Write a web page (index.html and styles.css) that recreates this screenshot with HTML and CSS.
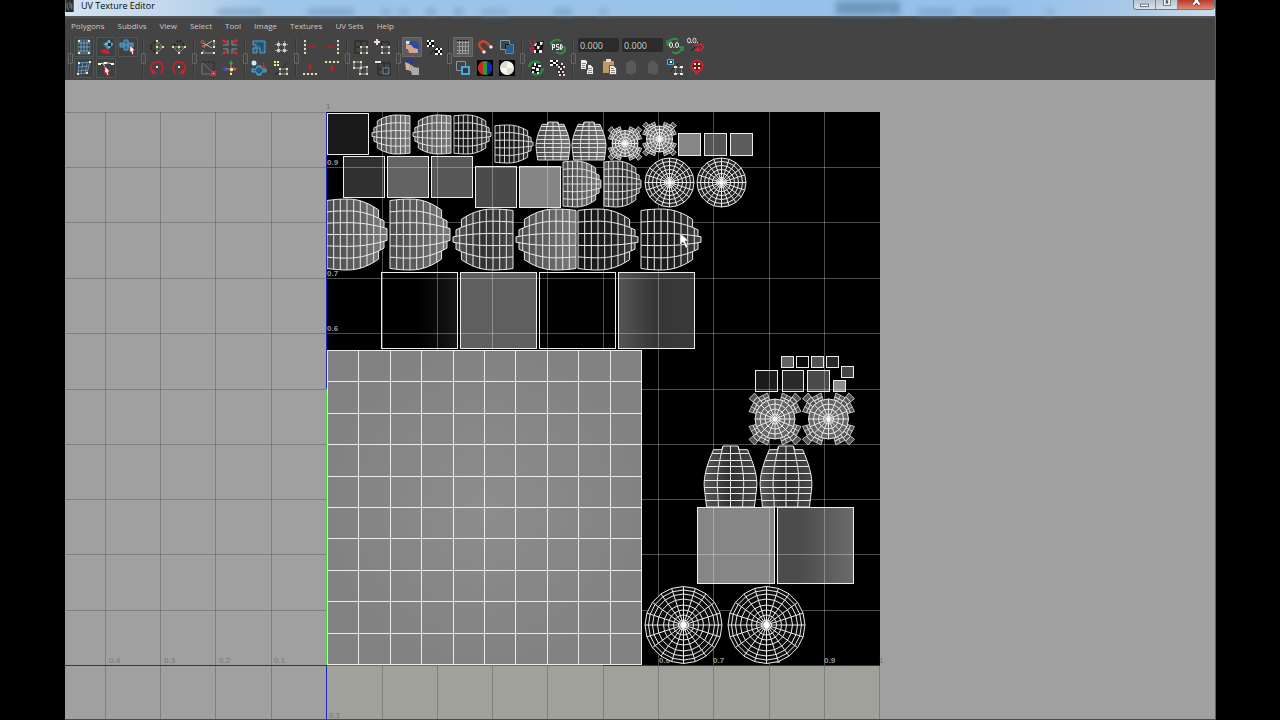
FILE: index.html
```html
<!DOCTYPE html>
<html lang="en">
<head>
<meta charset="utf-8">
<title>UV Texture Editor</title>
<link rel="stylesheet" href="styles.css">
</head>
<body>
<main class="window">
  <header class="titlebar">
    <svg class="app-icon" viewBox="0 0 9 13" aria-hidden="true"><rect width="9" height="13" fill="#26292d"/><path d="M2 3v6l2 2M5 2v7M7 4v6" stroke="#8b9299" fill="none"/></svg>
    <h1 class="title">UV Texture Editor</h1>
    <span class="haze" aria-hidden="true"></span>
    <div class="window-buttons">
      <button class="wb" aria-label="Minimize"><svg viewBox="0 0 24 10"><rect x="7.500" y="4.500" width="9" height="3" fill="#fff" stroke="#56616c"/></svg></button>
      <button class="wb" aria-label="Maximize"><svg viewBox="0 0 24 10"><path d="M8.500-1v7h8v-7" fill="#fff" stroke="#56616c"/><rect x="11" width="3" height="4" fill="#56616c"/></svg></button>
      <button class="wb close" aria-label="Close"><svg viewBox="0 0 36 10"><path d="M15-3l7 8M22-3l-7 8" stroke="#5d2424" stroke-width="4"/><path d="M15-3l7 8M22-3l-7 8" stroke="#fff" stroke-width="2.500"/></svg></button>
    </div>
  </header>
  <nav class="menubar">
    <button>Polygons</button><button>Subdivs</button><button>View</button><button>Select</button><button>Tool</button><button>Image</button><button>Textures</button><button>UV Sets</button><button>Help</button>
  </nav>
  <div class="toolbar" role="toolbar" aria-label="UV tools">
    <span class="sep"></span>
    <div class="group cols3">
      <button class="tool framed" aria-label="Lattice"><svg viewBox="0 0 20 20"><path d="M4 6h12M4 10h12M4 14h12M7 3v14M10 3v14M13 3v14" stroke="#6f9fc9"/><path d="M4 3h12v14H4z" fill="none" stroke="#55718b"/><path d="M4 3h2v2H4zM14 3h2v2h-2zM4 15h2v2H4zM14 15h2v2h-2z" fill="#eceac0"/></svg></button>
      <button class="tool framed" aria-label="Move shell"><svg viewBox="0 0 20 20"><path d="M7 7l6-4 4 5-5 5z" fill="#3e88ae"/><path d="M4 13l5-1 5 3-1 2-6-1z" fill="#d3202c"/><path d="M13 3v8M9 7h8" stroke="#b0dbe8"/><path d="M12 6h3v3h-3z" fill="#222"/></svg></button>
      <button class="tool framed" aria-label="Select shell"><svg viewBox="0 0 20 20"><path d="M2 6h4V3h4v3h5v4h-5v3H6v-3H2z" fill="#2f6b91" stroke="#5a9fc4"/><path d="M6 6v4M10 6v4M2 8h13" stroke="#5a9fc4"/><path d="M12 8l5 5.500-2 .500 1 3-2 .500-1-3-1.500 1z" fill="#fff" stroke="#b71b3b"/></svg></button>
      <button class="tool framed" aria-label="Smudge"><svg viewBox="0 0 20 20"><path d="M5 5l11-1-3 11-9 1zM4 9l11-1M4 13l10-1M9 4L7 16M13 4l-2 12" fill="none" stroke="#6b90b0"/><path d="M4 4h2v2H4zM15 3h2v2h-2zM3 15h2v2H3zM12 14h2v2h-2z" fill="#eceac0"/></svg></button>
      <button class="tool framed" aria-label="Edge select"><svg viewBox="0 0 20 20"><path d="M3 6q7-3 14 0M7 5l3 6" fill="none" stroke="#ddd"/><path d="M2 5h3v2H2zM8 4h3v2H8zM15 5h3v2h-3z" fill="#ffffd4"/><path d="M9 8l5 5.500-2 .500 1 3-2 .500-1-3-1.500 1z" fill="#fff" stroke="#b71b3b"/></svg></button>
    </div>
    <span class="sep"></span>
    <div class="group cols2">
      <button class="tool" aria-label="Flip U"><svg viewBox="0 0 20 20"><path d="M10 4v12M10 10h5M10 4l6 6-6 6" stroke="#85876f" fill="none"/><path d="M8 5l-5 5 5 5" stroke="#242424" fill="none" stroke-width="2" stroke-dasharray="2 2"/><path d="M9 3h2v2H9zM15 9h2v2h-2zM9 9h2v2H9zM9 15h2v2H9z" fill="#e4e3a6"/></svg></button>
      <button class="tool" aria-label="Flip V"><svg viewBox="0 0 20 20"><path d="M4 10h12M10 10v5M4 10l6 6 6-6" stroke="#85876f" fill="none"/><path d="M5 8l5-5 5 5" stroke="#242424" fill="none" stroke-width="2" stroke-dasharray="2 2"/><path d="M3 9h2v2H3zM9 9h2v2H9zM15 9h2v2h-2zM9 15h2v2H9z" fill="#e4e3a6"/></svg></button>
      <button class="tool" aria-label="Rotate left"><svg viewBox="0 0 20 20"><path d="M7 15a6 6 0 1 1 6 0" fill="none" stroke="#c61e2b" stroke-width="1.800"/><path d="M4 16h6l-4-5z" fill="#d2202e"/><path d="M9 8h2v2H9z" fill="#f8eec0"/></svg></button>
      <button class="tool" aria-label="Rotate right"><svg viewBox="0 0 20 20"><path d="M7 15a6 6 0 1 1 6 0" fill="none" stroke="#c61e2b" stroke-width="1.800"/><path d="M16 16h-6l4-5z" fill="#d2202e"/><path d="M9 8h2v2H9z" fill="#f8eec0"/></svg></button>
    </div>
    <span class="sep"></span>
    <div class="group cols2">
      <button class="tool" aria-label="Cut edges"><svg viewBox="0 0 20 20"><path d="M4 16h12M16 4v5M6 13l-2 3" stroke="#999" fill="none"/><path d="M5 6l9 5M6 9l8-5" stroke="#bbb"/><circle cx="4.500" cy="5" r="1.500" fill="none" stroke="#cb6038"/><path d="M4 9l3 1" stroke="#cb6038" stroke-width="2"/><path d="M15 3h2v2h-2zM15 9h2v2h-2zM3 15h2v2H3zM15 15h2v2h-2z" fill="#eceac0"/></svg></button>
      <button class="tool" aria-label="Split UVs"><svg viewBox="0 0 20 20"><path d="M8 3v5H3M12 3v5h5M8 17v-5H3M12 17v-5h5" stroke="#7899a3" fill="none"/><path d="M2 3h3l2 3-3-1zM18 3h-3l-2 3 3-1zM2 17h3l2-3-3 1zM18 17h-3l-2-3 3 1z" fill="#d42836" stroke="#d42836"/></svg></button>
      <button class="tool" aria-label="Sew edges"><svg viewBox="0 0 20 20"><path d="M4 4h12v9" stroke="#292929" fill="none" stroke-dasharray="2 1"/><path d="M4 5v11h9M5 5l9 9" stroke="#777" fill="none"/><path d="M13 13h5v5h-5z" fill="#cf2e3a"/><path d="M15 15h1v1h-1z" fill="#ffd5ca"/></svg></button>
      <button class="tool" aria-label="Move and sew"><svg viewBox="0 0 20 20"><path d="M4 11h12M11 5v12" stroke="#b7975a"/><path d="M11 2l2 4H9z" fill="#2cab38"/><path d="M6 8v6l-4-3z" fill="#2851e6"/><path d="M14 9l3 2-3 2z" fill="#dc5644"/><path d="M10 10h3v3h-3zM10 15h2v2h-2z" fill="#f1e5b5"/></svg></button>
    </div>
    <span class="sep"></span>
    <div class="group cols2">
      <button class="tool" aria-label="Layout"><svg viewBox="0 0 20 20"><path d="M4 4h12v12h-5v-5H8v5H4v-5h3V8H4z" fill="#246182" stroke="#58a3c4"/><path d="M8 7h5v6" fill="none" stroke="#1a4055"/></svg></button>
      <button class="tool" aria-label="Grid UVs"><svg viewBox="0 0 20 20"><path d="M7.500 4v12M13.500 4v12M4 7.500h13M4 13.500h13" stroke="#999"/><path d="M6 6h3v3H6zM12 6h3v3h-3zM6 12h3v3H6zM12 12h3v3h-3z" fill="#cfcdaa"/></svg></button>
      <button class="tool" aria-label="Unfold"><svg viewBox="0 0 20 20"><path d="M3 11h5V8h4v3h5v3h-5v3H8v-3H3z" fill="#277ba4" stroke="#5aa8cb"/><path d="M8 11v3h4v-3z" fill="none" stroke="#153c58"/><circle cx="5" cy="5" r="2.500" fill="#c8edfc"/><path d="M14 4v4h-2l3 3 2-3h-2V4z" fill="#bd352a"/></svg></button>
      <button class="tool" aria-label="Spread UVs"><svg viewBox="0 0 20 20"><path d="M4 17L16 5" stroke="#222"/><path d="M9 11h7v5H9z" fill="none" stroke="#999"/><path d="M3 3h2v2H3zM6 3h2v2H6zM3 6h2v2H3zM6 6h2v2H6z" fill="#f4f183"/><path d="M8 10h2v2H8zM15 10h2v2h-2zM8 15h2v2H8zM15 15h2v2h-2z" fill="#e3e1ac"/></svg></button>
    </div>
    <span class="sep"></span>
    <div class="group cols2">
      <button class="tool" aria-label="Align minimum U"><svg viewBox="0 0 20 20"><path d="M5 4v12" stroke="#666"/><path d="M4 3h2v2H4zM4 7h2v2H4zM4 11h2v2H4zM4 15h2v2H4z" fill="#dfddb2"/><path d="M8 10l4-2v1h4v2h-4v1z" fill="#a92029"/></svg></button>
      <button class="tool" aria-label="Align maximum U"><svg viewBox="0 0 20 20"><path d="M16 4v12" stroke="#666"/><path d="M15 3h2v2h-2zM15 7h2v2h-2zM15 11h2v2h-2zM15 15h2v2h-2z" fill="#dfddb2"/><path d="M13 10L9 8v1H5v2h4v1z" fill="#a92029"/></svg></button>
      <button class="tool" aria-label="Align minimum V"><svg viewBox="0 0 20 20"><path d="M4 16h12" stroke="#666"/><path d="M3 15h2v2H3zM7 15h2v2H7zM11 15h2v2h-2zM15 15h2v2h-2z" fill="#dfddb2"/><path d="M10 13L7 9h2V6h2v3h2z" fill="#b5232d"/></svg></button>
      <button class="tool" aria-label="Align maximum V"><svg viewBox="0 0 20 20"><path d="M4 4h12" stroke="#666"/><path d="M3 3h2v2H3zM7 3h2v2H7zM11 3h2v2h-2zM15 3h2v2h-2z" fill="#dfddb2"/><path d="M10 14L7 10h2V7h2v3h2z" fill="#b5232d"/></svg></button>
    </div>
    <span class="sep"></span>
    <div class="group cols2">
      <button class="tool" aria-label="Isolate toggle"><svg viewBox="0 0 20 20"><path d="M4 4h12v12H4zM10 4v12M4 10h12" fill="none" stroke="#222"/><path d="M10 10h6v6h-6z" fill="none" stroke="#999"/><path d="M9 9h2v2H9zM15 9h2v2h-2zM9 15h2v2H9zM15 15h2v2h-2z" fill="#e2e0b4"/></svg></button>
      <button class="tool" aria-label="Add to isolation"><svg viewBox="0 0 20 20"><path d="M8 5h8v11H9z" fill="none" stroke="#222"/><path d="M9 10h7v6H9z" fill="none" stroke="#999"/><path d="M4 2v6M1 5h6" stroke="#f4d9de" stroke-width="2"/><path d="M8 9h2v2H8zM15 9h2v2h-2zM8 15h2v2H8zM15 15h2v2h-2z" fill="#e4e2a4"/></svg></button>
      <button class="tool" aria-label="Isolate selection"><svg viewBox="0 0 20 20"><path d="M3 4h7v6H3zM9 9h7v7H9z" fill="none" stroke="#aaa"/><path d="M2 3h2v2H2zM9 3h2v2H9zM2 9h2v2H2zM9 9h2v2H9zM15 8h2v2h-2zM8 15h2v2H8zM15 15h2v2h-2z" fill="#e4e2b4"/></svg></button>
      <button class="tool" aria-label="Remove from isolation"><svg viewBox="0 0 20 20"><path d="M5 5h12v12H5zM11 5v12M5 11h12" fill="none" stroke="#222"/><path d="M10 10h6v6h-6z" fill="none" stroke="#6b8ea1"/><path d="M2 4h6" stroke="#f2dce0" stroke-width="2"/></svg></button>
    </div>
    <span class="sep"></span>
    <div class="group cols2">
      <button class="tool pressed" aria-label="Display image"><svg viewBox="0 0 20 20"><path d="M4 4h10l3 4v7l-8-5-5-4z" fill="#294ca4"/><path d="M4 7l5 1 3 3 4 1v4H7l-1-4H4z" fill="#d6a48b"/><path d="M4 4h4L7 7H4z" fill="#cbe1f5"/></svg></button>
      <button class="tool" aria-label="Toggle filtering"><svg viewBox="0 0 20 20"><path d="M3 3h7v7H3zM11 11h7v7h-7z" fill="#111"/><path d="M3 3h2v2H3zM7 3h3v2H7zM5 5h2v3H5zM8 8h2v2H8zM3 8h2v2H3zM11 11h3v2h-3zM16 11h2v2h-2zM14 13h2v3h-2zM11 16h3v2h-3zM16 16h2v2h-2z" fill="#fff"/><path d="M6 17l8-8" stroke="#151515"/></svg></button>
      <button class="tool" aria-label="Dim image"><svg viewBox="0 0 20 20"><path d="M3 2h8v7H3z" fill="#273e89"/><path d="M3 4l5 2v6H4z" fill="#dfaa9b"/><path d="M7 7h8l2 3v7h-7l-1-4H7z" fill="#a9aaa8"/><path d="M8 6h7l2 4-5-1z" fill="#444"/></svg></button>
    </div>
    <span class="sep"></span>
    <div class="group cols3">
      <button class="tool pressed" aria-label="Toggle grid"><svg viewBox="0 0 20 20"><path d="M4 5.500h12M4 9.500h12M4 13.500h12M4 16.500h12M6.500 4v13M9.500 4v13M12.500 4v13M15.500 4v13" stroke="#999"/><path d="M4 3.500h12" stroke="#222" stroke-dasharray="2 1"/></svg></button>
      <button class="tool" aria-label="Snap to pixels"><svg viewBox="0 0 20 20"><path d="M9 15l-4-5C2 6 8 2 12 6l5 5" fill="none" stroke="#ce4435" stroke-width="2.500"/><path d="M8 14l2 2M15 9l2 2" stroke="#eee" stroke-width="3"/></svg></button>
      <button class="tool" aria-label="Toggle shaded"><svg viewBox="0 0 20 20"><path d="M3.500 3.500h9v9h-9z" fill="none" stroke="#7a9eb4"/><path d="M8.500 7.500h8v9h-8z" fill="#245f8d" stroke="#4b8abb"/><path d="M8.500 12V7.500h4" stroke="#151515" fill="none"/></svg></button>
      <button class="tool" aria-label="Toggle borders"><svg viewBox="0 0 20 20"><path d="M3.500 3.500h9v9h-9z" fill="none" stroke="#8399a6"/><path d="M9 9h7v7H9z" fill="#303b43" stroke="#50a4dc" stroke-width="2"/></svg></button>
      <button class="tool" aria-label="RGB channels"><svg viewBox="0 0 20 20"><path d="M2 2h16v16H2z" fill="#000"/><circle cx="10" cy="10" r="7" fill="#29a12f"/><path d="M8 3.300a7 7 0 0 0 0 13.400z" fill="#cf2922"/><path d="M12 3.300a7 7 0 0 1 0 13.400z" fill="#1825c5"/></svg></button>
      <button class="tool" aria-label="Alpha channel"><svg viewBox="0 0 20 20"><path d="M2 2h16v16H2z" fill="#000"/><circle cx="10" cy="10" r="7" fill="#f5f5f5"/><path d="M10 3v7H3a7 7 0 0 1 7-7M10 10h7a7 7 0 0 1-7 7" fill="#ddddcf"/></svg></button>
    </div>
    <span class="sep"></span>
    <div class="group cols2">
      <button class="tool" aria-label="Bake texture"><svg viewBox="0 0 20 20"><path d="M8 6l10-2-2 12H8z" fill="#111"/><path d="M9 6h2l-1 3H8zM14 5h3l-1 3h-2zM11 9h3l-1 3h-2zM8 13h2v3H8zM13 13h3v3h-3z" fill="#eee"/><path d="M3 3l4 7M4 11h5l-3 4zM9 3v4" stroke="#d12638" fill="none"/></svg></button>
      <button class="tool" aria-label="Update PSD"><svg viewBox="0 0 20 20"><path d="M3 7c2-5 8-5 10-3M8 15c5 3 9 1 9-4" fill="none" stroke="#2c8f41" stroke-width="2"/><path d="M3 4v4h4M17 15v-5h-4" fill="none" stroke="#2c8f41" stroke-width="1.500"/><path d="M4.500 13V7.500h2v3h-2M11 7.500H8.500v2.500H11v2.500H8M12.500 7.500h1q2 2.500 0 5h-1z" stroke="#f3f3f3" fill="none"/></svg></button>
      <button class="tool" aria-label="Refresh image"><svg viewBox="0 0 20 20"><path d="M3 9c1-6 8-6 11-4M6 15c5 3 10 1 11-5" fill="none" stroke="#2b8745" stroke-width="2.500"/><path d="M7 5l8 2-2 9-8-2z" fill="#111"/><path d="M8 5h2v3H8zM12 7h3v2h-3zM6 9h3v2H6zM10 10h3v3h-3zM6 13h2v2H6zM11 14h2v2h-2z" fill="#eee"/></svg></button>
      <button class="tool" aria-label="Use image ratio"><svg viewBox="0 0 20 20"><path d="M2 2h8v6H2z" fill="#111"/><path d="M2 2h3v2H2zM8 2h2v2H8zM5 4h3v2H5zM2 6h3v2H2zM8 6h2v2H8z" fill="#fff"/><path d="M9 8l4-3 4 3-2 3 2 3-2 3H11l-2-3 2-3z" fill="#292929"/><path d="M13 5h2v2h-2zM10 8h2v2h-2zM15 8h2v2h-2zM12 10h2v2h-2zM10 13h2v2h-2zM14 13h2v2h-2zM11 16h2v2h-2zM15 16h2v2h-2z" fill="#f1ddd7"/></svg></button>
    </div>
    <span class="sep"></span>
    <div class="group cols6">
      <input class="coord" type="text" value="0.000" aria-label="U coordinate">
      <input class="coord" type="text" value="0.000" aria-label="V coordinate">
      <button class="tool" aria-label="Refresh values"><svg viewBox="0 0 20 20"><path d="M3 7c2-6 8-6 10-4M7 15c5 3 9 0 10-5" fill="none" stroke="#2f9344" stroke-width="2"/><path d="M2 3v5h4M18 14v-4h-4" fill="none" stroke="#2f9344" stroke-width="1.500"/><ellipse cx="6" cy="8" rx="1.500" ry="2.500" stroke="#eee" fill="none"/><ellipse cx="12" cy="8" rx="1.500" ry="2.500" stroke="#eee" fill="none"/><path d="M8.500 10h1v1h-1z" fill="#eee"/></svg></button>
      <button class="tool" aria-label="Toggle coordinate entry"><svg viewBox="0 0 20 20"><ellipse cx="2" cy="3.500" rx="1.500" ry="2.500" stroke="#ddd" fill="none"/><ellipse cx="7.500" cy="3.500" rx="1.500" ry="2.500" stroke="#ddd" fill="none"/><path d="M4 5h1v1H4zM10 5h1v1h-1z" fill="#eee"/><path d="M4 14l9-9" stroke="#191919"/><path d="M8 9c3-3 8-2 8 1s-3 4-6 2" fill="none" stroke="#cb2432" stroke-width="2"/><path d="M12 10v5l-5-2z" fill="#d02636"/></svg></button>
      <button class="tool" aria-label="Copy"><svg viewBox="0 0 20 20"><path d="M3.500 1.500h5l2 2v8h-7zM9.500 6.500h4l3 3v7h-7z" fill="#eeeee9" stroke="#444"/><path d="M5 5.500h4M5 7.500h3M5 9.500h3M11 10.500h4M11 12.500h4M11 14.500h4" stroke="#888"/></svg></button>
      <button class="tool" aria-label="Paste"><svg viewBox="0 0 20 20"><path d="M4 3h11v12H4z" fill="#c09861"/><path d="M7 1h5v3H7z" fill="#ddd"/><path d="M10.500 7.500h4l3 3v6h-7z" fill="#eeede8" stroke="#555"/><path d="M12 10.500h3M12 12.500h4M12 14.500h4" stroke="#888"/></svg></button>
      <button class="tool" aria-label="Paste U" disabled><svg viewBox="0 0 20 20"><path d="M5 5l5-3 5 3v10l-5 2-5-2z" fill="#595959"/></svg></button>
      <button class="tool" aria-label="Paste V" disabled><svg viewBox="0 0 20 20"><path d="M5 6l4-4 6 4v9l-3 2-7-2z" fill="#595959"/></svg></button>
      <button class="tool" aria-label="Copy faces"><svg viewBox="0 0 20 20"><path d="M2.500 1.500h6v5h-6z" fill="#174c75" stroke="#5ca9d8"/><path d="M5 3h2v2H5z" fill="#fff"/><path d="M5 14L14 5" stroke="#222"/><path d="M10.500 9.500h6v6h-6z" fill="none" stroke="#999" stroke-dasharray="2 1"/><path d="M9 8h3v2H9zM15 8h3v2h-3zM9 15h3v2H9zM15 15h3v2h-3z" fill="#eee"/></svg></button>
      <button class="tool" aria-label="Cycle UVs"><svg viewBox="0 0 20 20"><circle cx="10" cy="8" r="5.500" fill="#621c20" stroke="#c82637" stroke-width="2"/><path d="M7 13h6l-4 4z" fill="#d32639"/><path d="M7 5h2v2H7zM11 5h2v2h-2zM7 9h2v2H7zM11 9h2v2h-2z" fill="#eee7bd"/></svg></button>
    </div>
  </div>
  <svg class="canvas" id="canvas" viewBox="65 80 1150 639" preserveAspectRatio="xMidYMid slice" role="img" aria-label="UV layout"></svg>
</main>
<script src="uv.js"></script>
</body>
</html>
```

FILE: styles.css
```css
* { box-sizing: border-box; }
body {
  margin: 0;
  padding: 0 64px 0 65px;
  background: #000;
  font-family: "Open Sans", "Noto Sans", sans-serif;
}
.window {
  display: flex;
  flex-direction: column;
  height: 100vh;
  overflow: hidden;
  border-right: 1px solid #5b6064;
  border-bottom: 1px solid #4b4b4b;
  background: #444;
}
button { margin: 0; padding: 0; border: 0; background: none; font: inherit; color: inherit; }
.titlebar {
  display: flex;
  align-items: flex-start;
  height: 18px;
  flex: none;
  border-bottom: 2px solid #51565a;
  background: linear-gradient(90deg, #d5e3f1 0, #c3d8ec 9%, #9fc5e8 18%, #94c0eb 82%, #a8c8e8 92%, #cbdbea 100%);
}
.app-icon { width: 9px; height: 12px; }
.title {
  margin: 0 0 0 7px;
  font-size: 9px;
  font-weight: 400;
  line-height: 11px;
  color: #08090b;
}
.haze {
  flex: 1;
  height: 14px;
  margin: 1px 24px 0 44px;
  filter: blur(3px);
  background:
    linear-gradient(90deg, transparent 0 2%, #668db0 2% 7%, transparent 7% 12%, #668db0 12% 17%, transparent 17% 20%, #7197ba 20% 21%, transparent 21% 22%, #7197ba 22% 23%, transparent 23% 25%, #668db0 25% 26%, transparent 26% 28%, #668db0 28% 29%, transparent 29% 31%, #7a9fc1 31% 34%, transparent 34% 39%, #668db0 39% 41%, transparent 41% 44%, #7197ba 44% 45%, transparent 45% 75%, #6790b7 75% 76%, transparent 76% 79%, #6790b7 79% 83%, transparent 83% 85%, #6790b7 85% 89%, transparent 89% 93%, #7ba2c7 93% 94%, transparent 94%) 0 8px / 100% 6px no-repeat,
    linear-gradient(90deg, transparent 0 70%, #557b9f 70% 77%, transparent 77%);
  opacity: .6;
}
.window-buttons {
  display: flex;
  height: 10px;
  border: 1px solid #6d7782;
  border-top: 0;
  border-radius: 0 0 4px 4px;
  overflow: hidden;
}
.wb { width: 22px; background: linear-gradient(#b5c2cf, #dbe5ee); border-right: 1px solid #7d8893; }
.wb svg { display: block; width: 100%; height: 9px; }
.close { width: 36px; border-right: 0; background: linear-gradient(#bb3a2c, #db8877); }
.menubar {
  display: flex;
  flex: none;
  gap: 13px;
  height: 18px;
  padding: 0 6px;
  font-size: 8px;
  line-height: 16px;
  color: #c8c8c8;
}
.menubar button { align-self: flex-start; }
.toolbar { display: flex; flex: none; height: 44px; padding: 1px 0 2px; }
.sep {
  position: relative;
  flex: none;
  width: 1px;
  margin: 1px 4px;
  background: #383838;
  box-shadow: 1px 0 #505050;
}
.sep::after {
  content: "";
  position: absolute;
  top: 15px;
  left: -1px;
  width: 3px;
  height: 9px;
  border: 1px solid #696969;
  border-radius: 1px;
}
.group { display: grid; grid-auto-rows: 20px; gap: 1px 2px; align-content: start; }
.cols2 { grid-template-columns: repeat(2, 20px); }
.cols3 { grid-template-columns: repeat(3, 20px); }
.cols6 { grid-template-columns: repeat(6, 20px); }
.tool { width: 20px; height: 20px; border-radius: 1px; }
.tool svg { display: block; width: 100%; height: 100%; }
.framed { background: #3c4242; box-shadow: inset 0 0 0 1px #505654; }
.pressed { background: #5c5c5c; box-shadow: inset 0 0 0 1px #6c6c6c; }
.coord {
  grid-column: span 2;
  align-self: start;
  justify-self: end;
  width: 41px;
  height: 14px;
  margin-top: 1px;
  padding: 0 2px;
  border: 0;
  border-radius: 2px;
  background: #2b2b2b;
  color: #cecece;
  font: 9px "Open Sans", "Noto Sans", sans-serif;
}
.canvas { display: block; flex: 1; width: 100%; min-height: 0; background: #a0a0a0; }
.wire { fill: none; stroke: #ececec; stroke-width: 1; }
.fine { stroke-width: .9; }
.ruler { font: 8px "Liberation Sans", Arial, sans-serif; fill: #747474; }
.ruler-dark { font-weight: 700; fill: #999; }
```

FILE: uv.js
```javascript
const NS = "http://www.w3.org/2000/svg";
const canvas = document.getElementById("canvas");

function add(tag, attrs, text) {
  const el = document.createElementNS(NS, tag);
  for (const key in attrs) el.setAttribute(key, attrs[key]);
  if (text) el.textContent = text;
  canvas.appendChild(el);
  return el;
}
const n = v => v.toFixed(1);
const path = pts => "M" + pts.map(p => n(p[0]) + " " + n(p[1])).join("L");

const defs = add("defs", {});
defs.innerHTML =
  '<linearGradient id="shade"><stop offset="0" stop-color="#5a5a5a"/><stop offset=".5" stop-color="#303030"/><stop offset="1" stop-color="#4a4a4a"/></linearGradient>' +
  '<linearGradient id="light"><stop offset="0" stop-color="#4c4c4c"/><stop offset=".5" stop-color="#606060"/><stop offset="1" stop-color="#7c7c7c"/></linearGradient>' +
  '<linearGradient id="dark"><stop offset="0" stop-color="#151515"/><stop offset=".6" stop-color="#202020"/><stop offset="1" stop-color="#484848"/></linearGradient>' +
  '<linearGradient id="edge"><stop offset=".5" stop-color="#000"/><stop offset="1" stop-color="#181818"/></linearGradient>' +
  '<linearGradient id="fade"><stop offset="0" stop-color="#555"/><stop offset=".5" stop-color="#363636"/><stop offset="1" stop-color="#3a3a3a"/></linearGradient>' +
  '<linearGradient id="side"><stop offset=".3" stop-color="#4c4c4c"/><stop offset="1" stop-color="#6b6b6b"/></linearGradient>' +
  '<radialGradient id="glow"><stop offset="0" stop-color="#8d8d8d"/><stop offset="1" stop-color="#828282"/></radialGradient>';

// Texture space and the grid around it
add("rect", { x: 327, y: 112, width: 553, height: 553, fill: "#000" });
add("rect", { x: 327, y: 666, width: 553, height: 53, fill: "#a0a19b" });

// Square shells: x, y, width, height, fill
const squares = [
  [327, 113, 41, 41, "#191919"], [343, 156, 41, 41, "#303030"], [387, 156, 41, 41, "#636363"],
  [431, 156, 41, 41, "#585858"], [475, 166, 41, 41, "#4b4b4b"], [519, 166, 41, 41, "#858585"],
  [678, 133, 22, 22, "#868686"], [704, 133, 22, 22, "#555"], [730, 133, 22, 22, "#5d5d5d"],
  [381, 272, 76, 76, "url(#edge)"], [460, 272, 76, 76, "#5f5f5f"], [539, 272, 76, 76, "#020202"],
  [618, 272, 76, 76, "url(#fade)"], [697, 507, 77, 76, "#868686"], [777, 507, 76, 76, "url(#side)"],
  [755, 370, 22, 21, "#1c1b1c"], [782, 370, 21, 21, "#2b292b"], [807, 370, 22, 21, "#4b4b4b"],
  [781, 356, 12, 11, "#636363"], [796, 356, 12, 11, "#100b0d"], [811, 356, 12, 11, "#535353"],
  [826, 356, 12, 11, "#292929"], [841, 366, 12, 11, "#474747"], [833, 380, 12, 11, "#8d8d8d"]
];
for (const [x, y, width, height, fill] of squares) add("rect", { x, y, width, height, fill });

const xs = [105, 160, 215, 271, 382, 437, 492, 547, 603, 658, 713, 769, 824];
const ys = [167, 222, 278, 333, 389, 444, 499, 554, 610];
let outer = "M65 112.500H880M879.500 112V719", inner = "";
for (const x of xs) {
  if (x < 327) outer += `M${x}.500 112V719`;
  else { inner += `M${x}.500 112V665`; outer += `M${x}.500 665V719`; }
}
for (const y of ys) { outer += `M65 ${y}.500H327`; inner += `M327 ${y}.500H880`; }
add("path", { d: outer, stroke: "#000", "stroke-opacity": .2, fill: "none" });
add("path", { d: inner, stroke: "#fff", "stroke-opacity": .3, fill: "none" });

const labels = [[327, 165, "0.9"], [327, 220, "0.8"], [327, 276, "0.7"], [327, 331, "0.6"],
  [659, 663, "0.6"], [713, 663, "0.7"], [769, 663, "0.8"], [824, 663, "0.9"]];
for (const [x, y, t] of labels) add("text", { x, y, class: "ruler ruler-dark" }, t);
for (const [x, y, t] of [[109, 663, "0.4"], [164, 663, "0.3"], [219, 663, "0.2"], [274, 663, "0.1"],
  [326, 109, "1"], [879, 663, "1"], [329, 718, "0.1"]]) add("text", { x, y, class: "ruler" }, t);

for (const [x, y, width, height] of squares)
  add("rect", { x: x + .5, y: y + .5, width, height, class: "wire" });

// Ground plane, ten by ten
add("rect", { x: 327, y: 350, width: 315, height: 315, fill: "url(#glow)" });
let plane = "";
for (let i = 0; i <= 10; i++) {
  const k = Math.round(i * 31.4);
  plane += `M${327.5 + k} 350V665M327 ${350.5 + k}H642`;
}
add("path", { d: plane, class: "wire" });

// Half barrel lying on its side; dir is the side that its tip points to
function barrel(x, y, w, h, dir, taper, cols, rows, fill, fine) {
  const cy = y + h / 2;
  const px = u => dir > 0 ? x + u * w : x + w - u * w;
  const bend = u => 1 - taper * Math.pow((u - .35) / .65, 2) * (u < .35 ? .3 : 1);
  const py = (u, j) => cy + (j / rows - .5) * h * bend(u);
  const reach = b => {
    const d = Math.abs(b + .5 - rows / 2) / (rows / 2);
    return d < .35 ? 1 : d < .7 ? .95 : .86;
  };
  const arc = (j, end) => {
    const pts = [];
    for (let i = 0; i <= 10; i++) pts.push([px(end * i / 10), py(end * i / 10, j)]);
    return pts;
  };
  let area = "", lines = "";
  for (let b = 0; b < rows; b++) {
    const end = reach(b);
    const outline = path(arc(b, end).concat(arc(b + 1, end).reverse())) + "Z";
    area += outline;
    for (let i = 1; i < cols; i++) {
      const u = i / cols;
      if (u < end - .06) lines += path([[px(u), py(u, b)], [px(u), py(u, b + 1)]]);
    }
    lines += path([[px(0), py(0, b)], [px(0), py(0, b + 1)]]) + path([[px(end), py(end, b)], [px(end), py(end, b + 1)]]);
  }
  for (let j = 0; j <= rows; j++)
    lines += path(arc(j, Math.max(reach(Math.max(j - 1, 0)), reach(Math.min(j, rows - 1)))));
  add("path", { d: area, fill: `url(#${fill})` });
  add("path", { d: lines, class: fine ? "wire fine" : "wire" });
}
barrel(327, 199, 60, 71, 1, .5, 9, 6, "light");
barrel(390, 199, 60, 71, 1, .5, 9, 6, "light");
barrel(453, 209, 60, 61, -1, .55, 9, 5, "shade");
barrel(516, 209, 60, 61, -1, .55, 9, 5, "light");
barrel(578, 209, 60, 61, 1, .55, 9, 5, "dark");
barrel(641, 209, 60, 61, 1, .55, 9, 5, "dark");
barrel(372, 115, 38, 39, -1, .5, 8, 5, "light", true);
barrel(413, 115, 38, 39, -1, .5, 8, 5, "light", true);
barrel(454, 115, 37, 39, 1, .5, 8, 5, "dark", true);
barrel(495, 125, 38, 38, 1, .5, 8, 5, "dark", true);
barrel(563, 161, 38, 46, 1, .5, 8, 6, "light", true);
barrel(604, 161, 37, 46, 1, .5, 8, 6, "shade", true);

// Upright barrel standing on its flat base
function jar(cx, y, w, h, rows, cols, fill, fine) {
  const half = t => w / 2 * (t < .65 ? .58 + .42 * Math.sin(t / .65 * Math.PI / 2) : 1 - .28 * (t - .65));
  const rim = [];
  for (let i = 1; i <= 12; i++) rim.push(.06 + .94 * i / 12);
  const left = [[cx - w * .14, y], [cx - w * .16, y + h * .06], [cx - half(.06), y + h * .06]].concat(rim.map(t => [cx - half(t), y + h * t]));
  const right = left.map(p => [2 * cx - p[0], p[1]]).reverse();
  const outline = path(left.concat(right)) + "Z";
  let lines = outline;
  for (let r = 1; r < rows; r++) {
    const t = r / rows;
    lines += path([[cx - half(t), Math.round(y + h * t) + .5], [cx + half(t), Math.round(y + h * t) + .5]]);
  }
  for (let c = 1; c < cols; c++) {
    const f = c / cols * 2 - 1;
    const top = Math.abs(f) > .55 ? .07 : 0;
    const pts = [];
    for (let i = 0; i <= 12; i++) {
      const t = top + (1 - top) * i / 12;
      pts.push([cx + f * half(t), y + h * t]);
    }
    lines += path(pts);
  }
  add("path", { d: outline, fill: `url(#${fill})` });
  add("path", { d: lines, class: fine ? "wire fine" : "wire" });
}
jar(730.5, 446, 53, 61, 9, 4, "shade");
jar(786, 446, 52, 61, 9, 4, "shade");
jar(553, 122, 34, 38, 9, 4, "light", true);
jar(589, 122, 34, 38, 9, 4, "light", true);

const polar = (cx, cy, r, a) => [cx + r * Math.cos(a * Math.PI / 180), cy + r * Math.sin(a * Math.PI / 180)];

// Cap seen from the pole: rings and spokes
function cap(cx, cy, radii, spokes, fill) {
  const r = radii[radii.length - 1];
  add("circle", { cx, cy, r, fill });
  let lines = "";
  for (const q of radii) {
    const pts = [];
    for (let i = 0; i < spokes; i++) pts.push(polar(cx, cy, q, i * 360 / spokes));
    lines += path(pts) + "Z";
  }
  for (let i = 0; i < spokes; i++) lines += path([[cx, cy], polar(cx, cy, r, i * 360 / spokes)]);
  add("path", { d: lines, class: "wire" });
  add("circle", { cx, cy, r: r > 30 ? 3 : 2, fill: "#fff" });
}
cap(683.5, 625, [5, 10, 15, 20, 26, 31, 35, 38.5], 20, "#0c0c0c");
cap(766.5, 625, [5, 10, 15, 20, 26, 31, 35, 38.5], 20, "#0c0c0c");
cap(669.5, 182.5, [5, 9, 13, 17, 21, 24.5], 20, "#222");
cap(721.5, 182.5, [5, 9, 13, 17, 21, 24.5], 20, "#222");

// Cap with a flap unfolded at each corner
function flower(cx, cy, s) {
  let lines = "";
  for (let q = 45; q < 360; q += 90) {
    for (const [a, b, rows] of [[-29, -7, [20, 23, 27]], [-7, 7, [20, 24, 28, 33]], [7, 29, [20, 23, 27]]]) {
      const mid = (a + b) / 2;
      for (let i = 1; i < rows.length; i++) {
        const lo = rows[i - 1] * s, hi = rows[i] * s;
        lines += path([polar(cx, cy, lo, q + a), polar(cx, cy, hi, q + a), polar(cx, cy, hi, q + b), polar(cx, cy, lo, q + b)]) + "Z";
        if (b - a > 15) lines += path([polar(cx, cy, lo, q + mid), polar(cx, cy, hi, q + mid)]);
      }
    }
  }
  add("path", { d: lines, fill: "#555", stroke: "#dedede", "stroke-width": .8 });
  cap(cx, cy, [5, 10, 15, 20].map(v => v * s), 16, "#666");
}
flower(775, 419, 1);
flower(828.5, 419, 1);
flower(625, 143.5, .65);
flower(659.5, 139, .65);

// Axes
add("path", { d: "M326.500 112V719M65 665.500H880", stroke: "#2525c5", fill: "none" });
add("path", { d: "M326.500 389V665", stroke: "#3edb38", fill: "none" });
add("path", { d: "M327 665.500H603", stroke: "#d83d45", fill: "none" });

// Pointer
add("path", { d: "M680 233v12l3-3 3 6 2-1-3-6h4z", fill: "#fff", stroke: "#555", "stroke-width": .5 });
```
